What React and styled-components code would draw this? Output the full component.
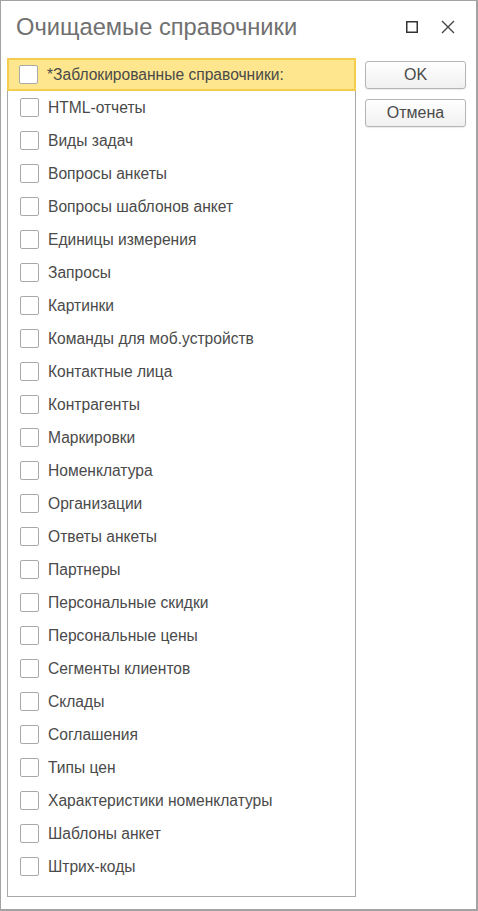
import React from "react";
import styled, { createGlobalStyle } from "styled-components";

const GlobalStyle = createGlobalStyle`
  html, body {
    margin: 0;
    padding: 0;
    background: #ffffff;
  }
  body {
    font-family: "Liberation Sans", Arial, sans-serif;
  }
`;

const items = [
    "*Заблокированные справочники:",
    "HTML-отчеты",
    "Виды задач",
    "Вопросы анкеты",
    "Вопросы шаблонов анкет",
    "Единицы измерения",
    "Запросы",
    "Картинки",
    "Команды для моб.устройств",
    "Контактные лица",
    "Контрагенты",
    "Маркировки",
    "Номенклатура",
    "Организации",
    "Ответы анкеты",
    "Партнеры",
    "Персональные скидки",
    "Персональные цены",
    "Сегменты клиентов",
    "Склады",
    "Соглашения",
    "Типы цен",
    "Характеристики номенклатуры",
    "Шаблоны анкет",
    "Штрих-коды",
];

const App = () => {
    return (
        <>
            <GlobalStyle />
            <Window>
                <TitleBar>
                    <Title>Очищаемые справочники</Title>
                    <WinButtons>
                        <WinButton title="Развернуть">
                            <svg width="12" height="12" viewBox="0 0 12 12">
                                <rect x="0.75" y="0.75" width="10.5" height="10.5" fill="none" stroke="#333" strokeWidth="1.5" />
                            </svg>
                        </WinButton>
                        <WinButton title="Закрыть">
                            <svg width="14" height="14" viewBox="0 0 14 14">
                                <path d="M1 1 L13 13 M13 1 L1 13" stroke="#444" strokeWidth="1.4" />
                            </svg>
                        </WinButton>
                    </WinButtons>
                </TitleBar>
                <Body>
                    <List>
                        {items.map((name, i) => (
                            <Row key={name} $active={i === 0}>
                                <Check />
                                <Label>{name}</Label>
                            </Row>
                        ))}
                    </List>
                    <Side>
                        <Button>OK</Button>
                        <Button>Отмена</Button>
                    </Side>
                </Body>
            </Window>
        </>
    );
};

const Window = styled.div`
  box-sizing: border-box;
  width: 478px;
  height: 911px;
  border: 1px solid #a3a3a3;
  border-right-width: 2px;
  border-bottom-width: 2px;
  background: #fff;
  display: flex;
  flex-direction: column;
`;

const TitleBar = styled.div`
  height: 58px;
  display: flex;
  align-items: center;
  padding: 0 0 5px 15px;
  box-sizing: border-box;
`;

const Title = styled.div`
  flex: 1;
  font-size: 23.7px;
  color: #707070;
`;

const WinButtons = styled.div`
  display: flex;
  align-items: center;
  gap: 18px;
  margin-right: 19px;
`;

const WinButton = styled.div`
  width: 18px;
  height: 18px;
  display: flex;
  align-items: center;
  justify-content: center;
`;

const Body = styled.div`
  flex: 1;
  display: flex;
  padding: 0 10px 12px 6px;
  gap: 9px;
`;

const List = styled.div`
  box-sizing: border-box;
  width: 349px;
  height: 839px;
  border: 1px solid #a8a8a8;
  display: flex;
  flex-direction: column;
`;

const Row = styled.div`
  box-sizing: border-box;
  height: 33px;
  display: flex;
  align-items: center;
  padding-left: ${(p) => (p.$active ? "10px" : "12px")};
  background: ${(p) => (p.$active ? "#fde68e" : "transparent")};
  border: ${(p) => (p.$active ? "2px solid #f4cd4c" : "none")};
  margin: ${(p) => (p.$active ? "-1px -1px 0 -1px" : "0")};
`;

const Check = styled.span`
  box-sizing: border-box;
  width: 19px;
  height: 19px;
  border: 1px solid #a9a9a9;
  border-radius: 2px;
  background: #fff;
  flex-shrink: 0;
`;

const Label = styled.span`
  margin-left: 9px;
  font-size: 15.6px;
  color: #4a4a4a;
  white-space: nowrap;
`;

const Side = styled.div`
  display: flex;
  flex-direction: column;
  gap: 10px;
  padding-top: 3px;
`;

const Button = styled.button`
  box-sizing: border-box;
  width: 101px;
  height: 28px;
  border: 1px solid #b5b5b5;
  border-radius: 3px;
  background: linear-gradient(#ffffff, #f0f0f0);
  font-family: "Liberation Sans", Arial, sans-serif;
  font-size: 16px;
  color: #4a4a4a;
  padding: 0;
  box-shadow: 0 1px 1px rgba(0, 0, 0, 0.08);
`;

export default App;
